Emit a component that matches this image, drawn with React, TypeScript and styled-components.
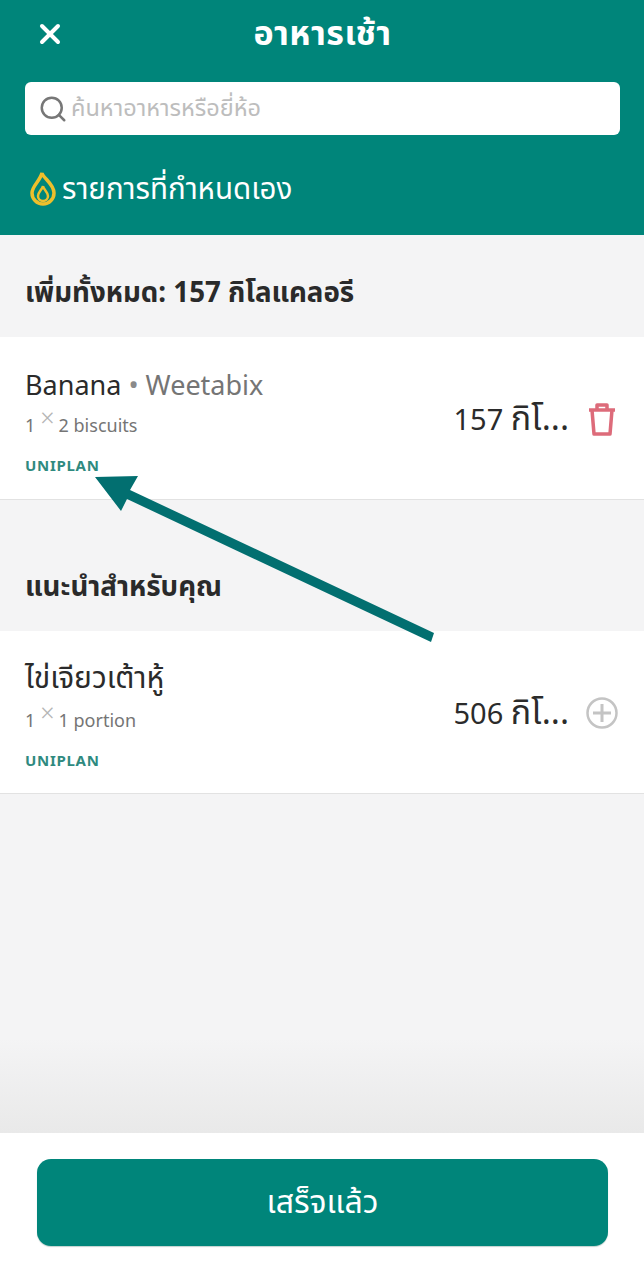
import React from 'react';
import styled, { createGlobalStyle } from 'styled-components';
import { Search, X } from 'lucide-react';

const GlobalStyle = createGlobalStyle`
  html, body {
    margin: 0;
    padding: 0;
    background: #f4f4f5;
    font-family: "Noto Sans", "Noto Sans Thai", "Liberation Sans", sans-serif;
    color: #262626;
  }
`;

const Page = styled.div`
  position: relative;
  width: 644px;
  height: 1280px;
  display: flex;
  flex-direction: column;
  overflow: hidden;
`;

const Header = styled.header`
  height: 235px;
  box-sizing: border-box;
  background: #00857a;
  padding: 0 24px 0 25px;
  display: flex;
  flex-direction: column;
  color: #fff;
`;

const TopBar = styled.div`
  height: 82px;
  display: flex;
  align-items: center;
  position: relative;
  justify-content: center;
  padding-bottom: 18px;
  box-sizing: border-box;
`;

const CloseButton = styled.span`
  position: absolute;
  left: 9px;
  top: 18px;
  display: flex;
  color: #fff;
`;

const Title = styled.h1`
  margin: 0;
  font-size: 34px;
  font-weight: 700;
  line-height: 36px;
  letter-spacing: 0.5px;
`;

const SearchBox = styled.div`
  height: 53px;
  background: #fff;
  border-radius: 6px;
  display: flex;
  align-items: center;
  gap: 3px;
  padding-left: 13px;
  color: #777;
`;

const Placeholder = styled.span`
  font-size: 23.5px;
  color: #bdbdbd;
`;

const CustomRow = styled.div`
  margin-top: 34px;
  display: flex;
  align-items: center;
  gap: 6px;
  padding-left: 5px;
  font-size: 29.5px;
  line-height: 38px;
`;

const SectionHead = styled.h2<{ $height: number; $pad: number }>`
  margin: 0;
  height: ${(p) => p.$height}px;
  box-sizing: border-box;
  padding: ${(p) => p.$pad}px 25px 0;
  font-size: 27.7px;
  line-height: 36px;
  font-weight: 700;
  color: #2a2a2a;
`;

const Card = styled.div`
  height: 163px;
  box-sizing: border-box;
  background: #fff;
  border-bottom: 1px solid #e2e2e2;
  padding: 29px 26px 0 25px;
  display: flex;
  justify-content: space-between;
`;

const Info = styled.div`
  display: flex;
  flex-direction: column;
`;

const FoodName = styled.div`
  font-size: 27px;
  line-height: 38px;
  color: #2b2b2b;
`;

const ThaiName = styled.span`
  font-size: 30px;
  position: relative;
  top: -2px;
`;

const Brand = styled.span`
  color: #757575;
`;

const Dot = styled.span`
  color: #8a8a8a;
`;

const Serving = styled.div`
  margin-top: 8px;
  display: flex;
  font-size: 18px;
  line-height: 26px;
  color: #757575;
`;

const Times = styled.span`
  font-size: 25px;
  line-height: 18px;
  height: 18px;
  font-weight: 300;
  color: #b5b5b5;
  margin: -4px 4px 0 5px;
`;

const Plan = styled.div`
  margin-top: 18px;
  font-size: 15px;
  line-height: 18px;
  font-weight: 700;
  letter-spacing: 0.7px;
  color: #2f8a7f;
`;

const Side = styled.div`
  display: flex;
  align-items: center;
  gap: 17px;
  height: 112px;
  padding-bottom: 6px;
  box-sizing: border-box;
`;

const ActionSlot = styled.div`
  width: 32px;
  display: flex;
  justify-content: center;
`;

const Calories = styled.div`
  font-size: 29px;
  line-height: 38px;
  color: #2b2b2b;
  white-space: nowrap;
`;

const CalorieUnit = styled.span`
  font-size: 34px;
  line-height: 30px;
`;

const Spacer = styled.div`
  flex: 1;
  background: linear-gradient(to bottom, #f4f4f5 0, #f4f4f5 72%, #e9e9e9 100%);
`;

const Footer = styled.footer`
  height: 147px;
  box-sizing: border-box;
  background: #fff;
  padding: 26px 36px 0 37px;
`;

const DoneButton = styled.button`
  width: 100%;
  height: 87px;
  border: 0;
  border-radius: 14px;
  background: #00857a;
  box-shadow: 0 1px 1px rgba(0, 70, 60, 0.25);
  color: #fff;
  font-family: inherit;
  font-size: 32px;
`;

const ArrowLayer = styled.svg`
  position: absolute;
  left: 0;
  top: 0;
  pointer-events: none;
`;

const Flame = () => (
  <svg width="26" height="36" viewBox="0 0 26 36" fill="none" stroke="#eebf2c" strokeWidth="3.500">
    <path d="M12 3c1 5 12 11 12 20a11 11 0 0 1-22 0c0-7 8-12 10-20z" />
    <path d="M13 16c0 3 5 6 5 10a5 5 0 0 1-10 0c0-4 4-6 5-10z" strokeWidth="2.500" />
  </svg>
);

const Trash = () => (
  <svg width="28" height="33" viewBox="0 0 28 33" fill="none" stroke="#dd6b7a" strokeWidth="3.500" strokeLinejoin="round">
    <path d="M1 7h26" />
    <path d="M9 7V2h10v5" />
    <path d="M4 7l2 24h16l2-24" />
  </svg>
);

const Plus = () => (
  <svg width="32" height="32" viewBox="0 0 32 32" fill="none" stroke="#c4c4c4">
    <circle cx="16" cy="16" r="14.500" strokeWidth="2.500" />
    <path d="M16 7v18M7 16h18" strokeWidth="3" />
  </svg>
);

type FoodProps = {
  name: React.ReactNode;
  brand?: string;
  serving: string;
  calories: string;
  action: React.ReactNode;
};

const FoodCard = ({ name, brand, serving, calories, action }: FoodProps) => (
  <Card>
    <Info>
      <FoodName>
        {name}
        {brand && (
          <>
            <Dot> • </Dot>
            <Brand>{brand}</Brand>
          </>
        )}
      </FoodName>
      <Serving>
        1<Times>×</Times>
        {serving}
      </Serving>
      <Plan>UNIPLAN</Plan>
    </Info>
    <Side>
      <Calories>
        {calories} <CalorieUnit>กิโ...</CalorieUnit>
      </Calories>
      <ActionSlot>{action}</ActionSlot>
    </Side>
  </Card>
);

export default function App() {
  return (
    <Page>
      <GlobalStyle />
      <Header>
        <TopBar>
          <CloseButton>
            <X size={32} strokeWidth={3} />
          </CloseButton>
          <Title>อาหารเช้า</Title>
        </TopBar>
        <SearchBox>
          <Search size={30} strokeWidth={2} />
          <Placeholder>ค้นหาอาหารหรือยี่ห้อ</Placeholder>
        </SearchBox>
        <CustomRow>
          <Flame />
          รายการที่กำหนดเอง
        </CustomRow>
      </Header>
      <SectionHead $height={102} $pad={38}>เพิ่มทั้งหมด: 157 กิโลแคลอรี</SectionHead>
      <FoodCard name="Banana" brand="Weetabix" serving="2 biscuits" calories="157" action={<Trash />} />
      <SectionHead $height={131} $pad={67}>แนะนำสำหรับคุณ</SectionHead>
      <FoodCard name={<ThaiName>ไข่เจียวเต้าหู้</ThaiName>} serving="1 portion" calories="506" action={<Plus />} />
      <Spacer />
      <Footer>
        <DoneButton>เสร็จแล้ว</DoneButton>
      </Footer>
      <ArrowLayer width="644" height="1280" viewBox="0 0 644 1280">
        <path d="M95 477L138 476L130 490L434 633L431 642L127 499L121 511Z" fill="#026f70" />
      </ArrowLayer>
    </Page>
  );
}
